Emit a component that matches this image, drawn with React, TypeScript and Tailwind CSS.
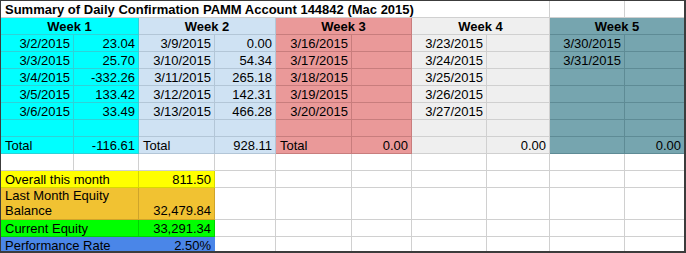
import React from "react";

type G = { bg: string; line: string };

const W1: G = { bg: "bg-[#00ffff]", line: "border-[#2ed2d8]" };
const W2: G = { bg: "bg-[#cfe2f3]", line: "border-[#b3c6d7]" };
const W3: G = { bg: "bg-[#ea9999]", line: "border-[#c87d7d]" };
const W4: G = { bg: "bg-[#efefef]", line: "border-[#d0d0d0]" };
const W5: G = { bg: "bg-[#76a5af]", line: "border-[#5e8b95]" };
const WH: G = { bg: "bg-white", line: "border-[#d0d0d0]" };
const YL: G = { bg: "bg-[#ffff00]", line: "border-[#d8d800]" };
const OR: G = { bg: "bg-[#f1c232]", line: "border-[#cfa42a]" };
const GR: G = { bg: "bg-[#00ff00]", line: "border-[#00d400]" };
const BL: G = { bg: "bg-[#4a86e8]", line: "border-[#4a86e8]" };

const W = [
  "w-[73px]",
  "w-[65px]",
  "w-[76px]",
  "w-[61px]",
  "w-[76px]",
  "w-[60px]",
  "w-[75px]",
  "w-[63px]",
  "w-[75px]",
  "w-[59px]",
];

const GROUPS = [W1, W1, W2, W2, W3, W3, W4, W4, W5, W5];

function Cell({
  w,
  g,
  last,
  align = "r",
  h = "h-[17px]",
  bold,
  noBottom,
  children,
}: {
  w: string;
  g: G;
  last?: boolean;
  align?: "r" | "l" | "c";
  h?: string;
  bold?: boolean;
  noBottom?: boolean;
  children?: React.ReactNode;
}) {
  const cls = [
    w,
    h,
    g.bg,
    g.line,
    "shrink-0 whitespace-nowrap leading-[18px]",
    noBottom ? "" : "border-b",
    last ? "" : "border-r",
    align === "r" ? "text-right pr-[3px]" : align === "c" ? "text-center" : "text-left pl-[4px]",
    bold ? "font-bold" : "",
  ].join(" ");
  return <div className={cls}>{children}</div>;
}

const rows: [string, string, string, string, string, string, string, string, string, string][] = [
  ["3/2/2015", "23.04", "3/9/2015", "0.00", "3/16/2015", "", "3/23/2015", "", "3/30/2015", ""],
  ["3/3/2015", "25.70", "3/10/2015", "54.34", "3/17/2015", "", "3/24/2015", "", "3/31/2015", ""],
  ["3/4/2015", "-332.26", "3/11/2015", "265.18", "3/18/2015", "", "3/25/2015", "", "", ""],
  ["3/5/2015", "133.42", "3/12/2015", "142.31", "3/19/2015", "", "3/26/2015", "", "", ""],
  ["3/6/2015", "33.49", "3/13/2015", "466.28", "3/20/2015", "", "3/27/2015", "", "", ""],
  ["", "", "", "", "", "", "", "", "", ""],
];

const totals = ["Total", "-116.61", "Total", "928.11", "Total", "0.00", "", "0.00", "", "0.00"];

const summary: { label: React.ReactNode; value: string; g: G; tall?: boolean; last?: boolean }[] = [
  { label: "Overall this month", value: "811.50", g: YL },
  {
    label: (
      <>
        Last Month Equity
        <br />
        Balance
      </>
    ),
    value: "32,479.84",
    g: OR,
    tall: true,
  },
  { label: "Current Equity", value: "33,291.34", g: GR },
  { label: "Performance Rate", value: "2.50%", g: BL, last: true },
];

export default function App() {
  return (
    <div className="w-[686px] h-[253px] bg-white border-t border-l border-r-2 border-b-2 border-[#3c3c3c] text-[13px] text-black font-['Liberation_Sans',Arial,sans-serif] overflow-hidden">
      {/* Title row */}
      <div className="flex">
        <Cell w="w-[549px]" g={WH} align="l" bold>
          Summary of Daily Confirmation PAMM Account 144842 (Mac 2015)
        </Cell>
        <Cell w={W[8]} g={WH} />
        <Cell w={W[9]} g={WH} last />
      </div>
      {/* Week headers */}
      <div className="flex">
        <Cell w="w-[138px]" g={W1} align="c" bold>
          Week 1
        </Cell>
        <Cell w="w-[137px]" g={W2} align="c" bold>
          Week 2
        </Cell>
        <Cell w="w-[136px]" g={W3} align="c" bold>
          Week 3
        </Cell>
        <Cell w="w-[138px]" g={W4} align="c" bold>
          Week 4
        </Cell>
        <Cell w="w-[134px]" g={W5} align="c" bold last>
          Week 5
        </Cell>
      </div>
      {/* Data rows */}
      {rows.map((r, ri) => (
        <div className="flex" key={ri}>
          {r.map((v, ci) => (
            <Cell key={ci} w={W[ci]} g={GROUPS[ci]} last={ci === 9}>
              {v}
            </Cell>
          ))}
        </div>
      ))}
      {/* Totals */}
      <div className="flex">
        {totals.map((v, ci) => (
          <Cell key={ci} w={W[ci]} g={GROUPS[ci]} last={ci === 9} align={ci % 2 === 0 ? "l" : "r"}>
            {v}
          </Cell>
        ))}
      </div>
      {/* Blank white row */}
      <div className="flex">
        {W.map((w, ci) => (
          <Cell key={ci} w={w} g={WH} last={ci === 9} />
        ))}
      </div>
      {/* Summary */}
      {summary.map((s, si) => {
        const h = s.tall ? "h-[32px]" : s.last ? "h-[14px]" : "h-[17px]";
        return (
          <div className="flex" key={si}>
            {s.tall ? (
              <>
                <div
                  className={`w-[138px] ${h} ${s.g.bg} ${s.g.line} border-r border-b shrink-0 flex flex-col justify-end pl-[4px] pb-[1px] leading-[15px] whitespace-nowrap`}
                >
                  <div>{s.label}</div>
                </div>
                <div
                  className={`w-[76px] ${h} ${s.g.bg} ${s.g.line} border-r border-b shrink-0 flex flex-col justify-end pr-[3px] pb-[1px] leading-[15px] text-right`}
                >
                  <div>{s.value}</div>
                </div>
              </>
            ) : (
              <>
                <Cell w="w-[138px]" h={h} g={s.g} align="l" noBottom={s.last}>
                  {s.label}
                </Cell>
                <Cell w={W[2]} h={h} g={s.g} noBottom={s.last}>
                  {s.value}
                </Cell>
              </>
            )}
            {W.slice(3).map((w, ci) => (
              <Cell key={ci} w={w} h={h} g={WH} last={ci === 6} noBottom={s.last} />
            ))}
          </div>
        );
      })}
    </div>
  );
}
